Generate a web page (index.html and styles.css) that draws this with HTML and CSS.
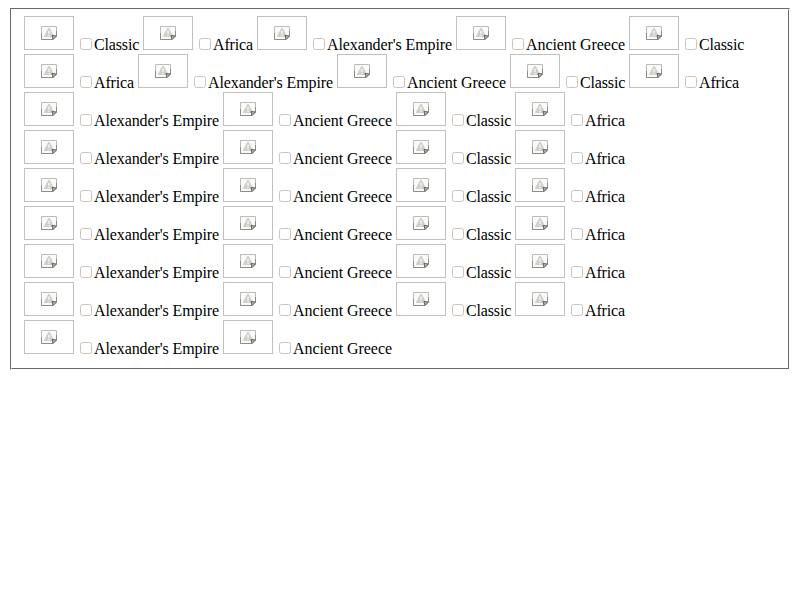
FILE: index.html
```
<!DOCTYPE html>
<html lang="en">
<head>
<meta charset="utf-8">
<title>Themes</title>
<link rel="stylesheet" href="styles.css">
</head>
<body>
<div class="frame">
<div class="list" id="list"></div>
</div>
<template id="option">
<label class="option">
<span class="thumb"><svg width="16" height="14" viewBox="0 0 16 14">
<path d="M.5 .5H15.5V10L12 13.5H.5Z" fill="#fafafa" stroke="#bcbcb6"/>
<path d="M.5 7V13.5H12M15.5 5V10" fill="none" stroke="#8c8c88"/>
<path d="M7.3 2H8.7L13 10V11H3V10Z" fill="#d0d0ca"/>
<path d="M8 4.5V8M8 9V10" stroke="#f6f6f4" stroke-width="1.4"/>
<path d="M11 9.5L15.5 10L12 13.5Z" fill="#b4b4b0" stroke="#62625e"/>
</svg></span>
<input type="checkbox">
<span class="name"></span>
</label>
</template>
<script src="script.js"></script>
</body>
</html>
```
FILE: styles.css
```
body {
  margin: 8px 10px;
  background: #fff;
  color: #000;
  font: 16px/18px "Liberation Serif", serif;
}
.frame {
  border: 1px solid;
  border-color: #696969 transparent transparent #696969;
}
.list {
  display: flex;
  flex-wrap: wrap;
  align-content: flex-start;
  gap: 4px;
  box-sizing: border-box;
  height: 360px;
  padding: 6px 12px;
  border: 1px solid;
  border-color: transparent #696969 #696969 transparent;
}
.option {
  display: flex;
  align-items: flex-end;
  height: 34px;
}
.thumb {
  display: flex;
  align-items: center;
  justify-content: center;
  box-sizing: border-box;
  width: 50px;
  height: 34px;
  border: 1px solid #c0c0c0;
}
.thumb svg {
  display: block;
}
input {
  appearance: none;
  box-sizing: border-box;
  width: 12px;
  height: 12px;
  margin: 0 2px 0 6px;
  border: 1px solid #cbc4bc;
  border-radius: 2.5px;
  background: #fff;
}
.name {
  margin-bottom: -4px;
  white-space: nowrap;
}
.classic { width: 45px; letter-spacing: -0.15px; }
.africa { width: 40px; letter-spacing: -0.15px; }
.alexander { width: 125px; letter-spacing: -0.1px; }
.greece { width: 99px; letter-spacing: -0.07px; }
```
FILE: script.js
```
const themes = [
  ["Classic", "classic"],
  ["Africa", "africa"],
  ["Alexander's Empire", "alexander"],
  ["Ancient Greece", "greece"]
];
const list = document.getElementById("list");
const template = document.getElementById("option");
for (let i = 0; i < 36; i++) {
  const [label, kind] = themes[i % themes.length];
  const option = template.content.cloneNode(true);
  const name = option.querySelector(".name");
  name.textContent = label;
  name.classList.add(kind);
  list.append(option);
}
```
